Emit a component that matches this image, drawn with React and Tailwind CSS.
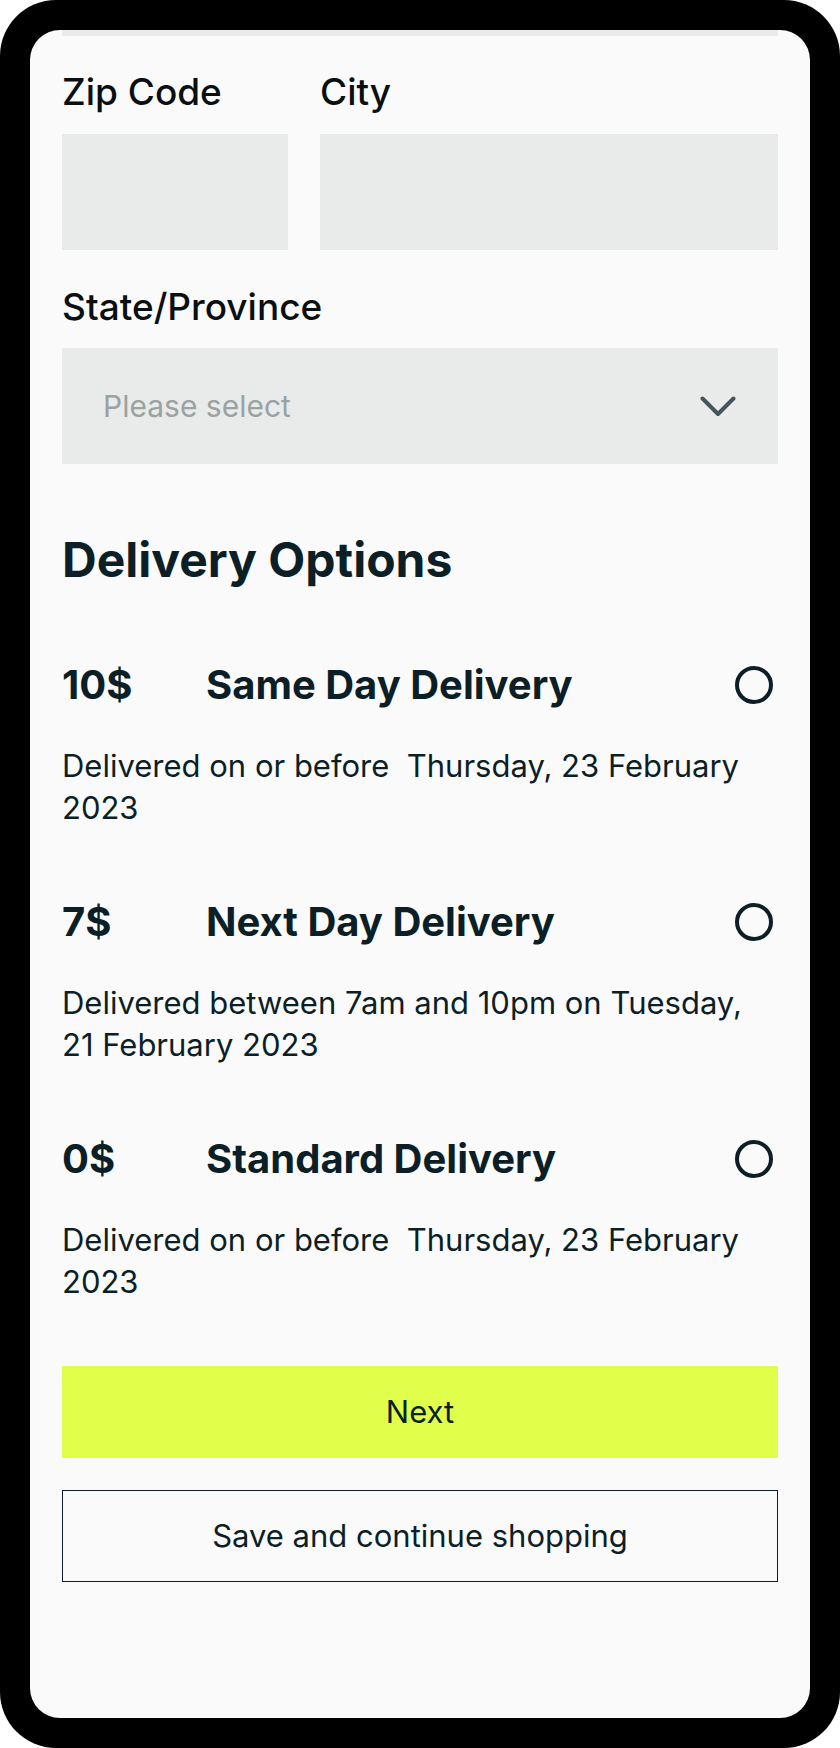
export default function App() {
  const options = [
    {
      price: "10$",
      title: "Same Day Delivery",
      lines: ["Delivered on or before\u00a0 Thursday, 23 February", "2023"],
    },
    {
      price: "7$",
      title: "Next Day Delivery",
      lines: ["Delivered between 7am and 10pm on Tuesday,", "21 February 2023"],
    },
    {
      price: "0$",
      title: "Standard Delivery",
      lines: ["Delivered on or before\u00a0 Thursday, 23 February", "2023"],
    },
  ];

  return (
    <div className="w-[840px] h-[1748px] bg-white font-['Inter','Noto_Sans',sans-serif] text-[#0c1f26]">
      <div className="h-full bg-black rounded-[56px] p-[30px]">
        <div className="h-full bg-[#fafafa] rounded-[30px] overflow-hidden px-[32px]">
          <div className="h-[6px] bg-[#e9ebea]" />

          <div className="flex gap-[32px] mt-[34px]">
            <div className="w-[226px] flex flex-col">
              <label className="text-[37px] leading-[44px] font-medium text-[#0a0f12]">Zip Code</label>
              <div className="mt-[20px] h-[116px] bg-[#e9ebea]" />
            </div>
            <div className="flex-1 flex flex-col">
              <label className="text-[37px] leading-[44px] font-medium text-[#0a0f12]">City</label>
              <div className="mt-[20px] h-[116px] bg-[#e9ebea]" />
            </div>
          </div>

          <div className="mt-[35px]">
            <label className="block text-[37px] leading-[44px] font-medium text-[#0a0f12]">State/Province</label>
            <div className="mt-[19px] h-[116px] bg-[#e9ebea] flex items-center justify-between pl-[41px] pr-[42px]">
              <span className="text-[30px] text-[#9aa2a2]">Please select</span>
              <svg width="36" height="21" viewBox="0 0 36 21" fill="none">
                <polyline
                  points="2.5,2.5 18,18 33.5,2.5"
                  stroke="#46555b"
                  strokeWidth="4"
                  strokeLinecap="round"
                  strokeLinejoin="round"
                />
              </svg>
            </div>
          </div>

          <h2 className="mt-[67px] text-[48px] leading-[58px] font-bold">Delivery Options</h2>

          {options.map((o, i) => (
            <div key={o.price} className={i === 0 ? "mt-[72px]" : "mt-[69px]"}>
              <div className="flex items-center h-[48px]">
                <span className="w-[144px] text-[40px] leading-[48px] font-bold">{o.price}</span>
                <span className="flex-1 text-[40px] leading-[48px] font-bold">{o.title}</span>
                <span className="w-[38px] h-[38px] rounded-full border-[4px] border-[#0c1f26] mr-[5px]" />
              </div>
              <p className="mt-[36px] text-[31px] leading-[42px]">
                {o.lines[0]}
                <br />
                {o.lines[1]}
              </p>
            </div>
          ))}

          <button className="mt-[63px] w-full h-[92px] bg-[#e0fe4a] text-[31px] flex items-center justify-center">
            Next
          </button>
          <button className="mt-[32px] w-full h-[92px] border border-[#0c1f26] text-[31px] flex items-center justify-center">
            Save and continue shopping
          </button>
        </div>
      </div>
    </div>
  );
}
